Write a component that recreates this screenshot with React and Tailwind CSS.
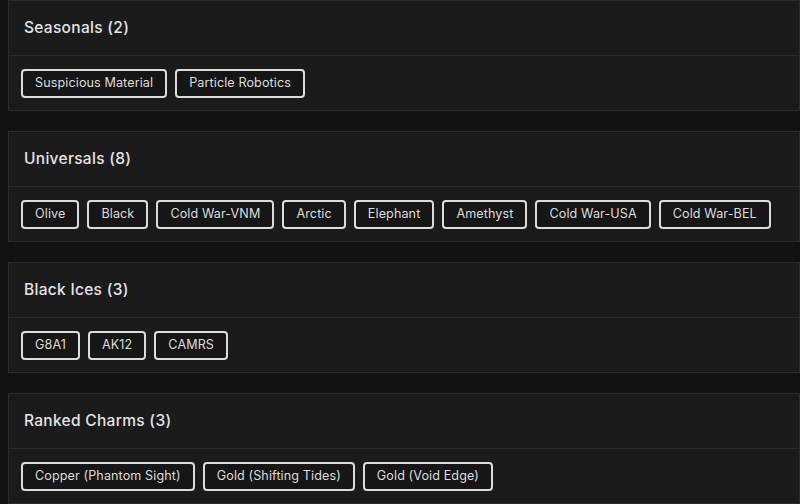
import React from "react";

const sections = [
  { title: "Seasonals (2)", items: ["Suspicious Material", "Particle Robotics"] },
  { title: "Universals (8)", items: ["Olive", "Black", "Cold War-VNM", "Arctic", "Elephant", "Amethyst", "Cold War-USA", "Cold War-BEL"] },
  { title: "Black Ices (3)", items: ["G8A1", "AK12", "CAMRS"] },
  { title: "Ranked Charms (3)", items: ["Copper (Phantom Sight)", "Gold (Shifting Tides)", "Gold (Void Edge)"] },
];

export default function App() {
  return (
    <div
      className="w-[800px] h-[504px] overflow-hidden bg-[#131313] pl-[8px] flex flex-col gap-[20px] text-[#e4e4e4]"
      style={{ fontFamily: "Inter, 'Open Sans', sans-serif" }}
    >
      {sections.map((s, i) => (
        <div key={i} className="shrink-0 bg-[#1b1b1b] border border-[#2d2d2d]">
          <div className="h-[55px] flex items-center px-[15px] border-b border-[#2d2d2d]">
            <span className="text-[15.5px] font-medium tracking-[0.3px]">{s.title}</span>
          </div>
          <div className="h-[54px] flex items-center gap-[8px] px-[12px]">
            {s.items.map((it) => (
              <div
                key={it}
                className="h-[29px] flex items-center px-[12px] border-2 border-[#dcdcdc] rounded-[4px] text-[12.6px] tracking-[0.1px] text-[#dcdcdc] bg-[#161616] whitespace-nowrap"
              >
                {it}
              </div>
            ))}
          </div>
        </div>
      ))}
    </div>
  );
}
